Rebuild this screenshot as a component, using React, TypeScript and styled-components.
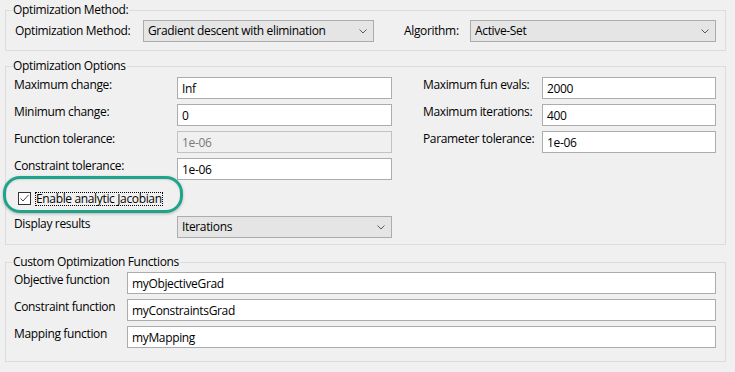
import React from "react";
import styled, { createGlobalStyle } from "styled-components";

const GlobalStyle = createGlobalStyle`
  html, body {
    margin: 0;
    padding: 0;
    background: #f0f0f0;
  }
  body {
    font-family: "Open Sans", "Noto Sans", "Liberation Sans", sans-serif;
    font-size: 12px;
    letter-spacing: -0.35px;
    line-height: 16px;
    color: #000;
  }
`;

const Page = styled.div`
  width: 735px;
  height: 372px;
  box-sizing: border-box;
  padding: 2px 9px 0 5px;
  display: flex;
  flex-direction: column;
`;

const Group = styled.fieldset<{ $top?: number; $pt: number; $pb: number }>`
  margin: ${(p) => p.$top ?? 0}px 0 0 0;
  border: 1px solid #dcdcdc;
  padding: ${(p) => p.$pt}px 9px ${(p) => p.$pb}px 8px;
  min-width: 0;
`;

const Legend = styled.legend`
  padding: 0 1px;
  margin-left: -2px;
  line-height: 16px;
`;

const MethodRow = styled.div`
  display: flex;
  align-items: center;
`;

const Label = styled.div<{ $w: number; $ml?: number }>`
  width: ${(p) => p.$w}px;
  margin-left: ${(p) => p.$ml ?? 0}px;
  flex: none;
  white-space: nowrap;
  align-self: flex-start;
  line-height: 16px;
`;

const InlineLabel = styled(Label)`
  align-self: center;
`;

const Combo = styled.div<{ $w?: number }>`
  box-sizing: border-box;
  height: 22px;
  ${(p) => (p.$w ? `width: ${p.$w}px; flex: none;` : "flex: 1;")}
  background: #e5e5e5;
  border: 1px solid #acacac;
  display: flex;
  align-items: center;
  padding: 0 6px 0 4px;
`;

const ComboText = styled.span`
  flex: 1;
  white-space: nowrap;
`;

const Chevron = () => (
  <svg width="8" height="5" viewBox="0 0 8 5" style={{ flex: "none" }}>
    <polyline points="0.5,0.5 4,4 7.5,0.5" fill="none" stroke="#5a5a5a" strokeWidth="1" />
  </svg>
);

const OptionsGrid = styled.div`
  display: flex;
  gap: 31px;
`;

const Column = styled.div<{ $grow?: boolean }>`
  display: flex;
  flex-direction: column;
  gap: 5px;
  ${(p) => (p.$grow ? "flex: 1; min-width: 0;" : "flex: none;")}
`;

const Row = styled.div`
  display: flex;
`;

const Field = styled.div<{ $w?: number; $disabled?: boolean }>`
  box-sizing: border-box;
  height: 22px;
  ${(p) => (p.$w ? `width: ${p.$w}px; flex: none;` : "flex: 1;")}
  background: ${(p) => (p.$disabled ? "#f0f0f0" : "#fff")};
  border: 1px solid ${(p) => (p.$disabled ? "#c2c2c2" : "#acacac")};
  color: ${(p) => (p.$disabled ? "#7a7a7a" : "#000")};
  padding: 3px 4px 0;
  line-height: 16px;
  white-space: nowrap;
`;

const CheckRow = styled.div`
  position: relative;
  display: flex;
  align-items: center;
  height: 15px;
  margin: 6px 0 5px;
  padding-left: 4px;
  &::before {
    content: "";
    position: absolute;
    left: -11px;
    top: -15px;
    width: 180px;
    height: 37px;
    box-sizing: border-box;
    border: 3px solid #1fa38b;
    border-radius: 17px;
    box-shadow: 0 1px 3px rgba(0, 0, 0, 0.25), inset 0 1px 2px rgba(0, 0, 0, 0.12);
    pointer-events: none;
  }
`;

const CheckBox = styled.span`
  box-sizing: border-box;
  width: 13px;
  height: 13px;
  border: 1px solid #333;
  background: #fff;
  display: flex;
  align-items: center;
  justify-content: center;
  flex: none;
`;

const CheckLabel = styled.span`
  margin-left: 4px;
  min-width: 128px;
  height: 14px;
  line-height: 14px;
  box-sizing: border-box;
  outline: 1px dotted #000;
  outline-offset: -1px;
  white-space: nowrap;
  padding-left: 1px;
`;

const FuncColumn = styled(Column)`
  flex: 1;
`;

export default function App() {
  return (
    <>
      <GlobalStyle />
      <Page>
        <Group $pt={2} $pb={8}>
          <Legend>Optimization Method:</Legend>
          <MethodRow>
            <InlineLabel $w={128} $ml={1}>Optimization Method:</InlineLabel>
            <Combo $w={231}>
              <ComboText>Gradient descent with elimination</ComboText>
              <Chevron />
            </Combo>
            <InlineLabel $w={66} $ml={30}>Algorithm:</InlineLabel>
            <Combo>
              <ComboText>Active-Set</ComboText>
              <Chevron />
            </Combo>
          </MethodRow>
        </Group>

        <Group $top={7} $pt={3} $pb={6}>
          <Legend>Optimization Options</Legend>
          <OptionsGrid>
            <Column>
              <Row>
                <Label $w={163}>Maximum change:</Label>
                <Field $w={215}>Inf</Field>
              </Row>
              <Row>
                <Label $w={163}>Minimum change:</Label>
                <Field $w={215}>0</Field>
              </Row>
              <Row>
                <Label $w={163}>Function tolerance:</Label>
                <Field $w={215} $disabled>1e-06</Field>
              </Row>
              <Row>
                <Label $w={163}>Constraint tolerance:</Label>
                <Field $w={215}>1e-06</Field>
              </Row>
              <CheckRow>
                <CheckBox>
                  <svg width="11" height="11" viewBox="0 0 11 11">
                    <polyline points="1.5,5.5 4,8 9.5,2" fill="none" stroke="#444" strokeWidth="1" />
                  </svg>
                </CheckBox>
                <CheckLabel>Enable analytic Jacobian</CheckLabel>
              </CheckRow>
              <Row>
                <Label $w={163}>Display results</Label>
                <Combo $w={215}>
                  <ComboText>Iterations</ComboText>
                  <Chevron />
                </Combo>
              </Row>
            </Column>
            <Column $grow>
              <Row>
                <Label $w={119}>Maximum fun evals:</Label>
                <Field>2000</Field>
              </Row>
              <Row>
                <Label $w={119}>Maximum iterations:</Label>
                <Field>400</Field>
              </Row>
              <Row>
                <Label $w={119}>Parameter tolerance:</Label>
                <Field>1e-06</Field>
              </Row>
            </Column>
          </OptionsGrid>
        </Group>

        <Group $top={9} $pt={2} $pb={13}>
          <Legend>Custom Optimization Functions</Legend>
          <FuncColumn>
            <Row>
              <Label $w={113}>Objective function</Label>
              <Field>myObjectiveGrad</Field>
            </Row>
            <Row>
              <Label $w={113}>Constraint function</Label>
              <Field>myConstraintsGrad</Field>
            </Row>
            <Row>
              <Label $w={113}>Mapping function</Label>
              <Field>myMapping</Field>
            </Row>
          </FuncColumn>
        </Group>
      </Page>
    </>
  );
}
